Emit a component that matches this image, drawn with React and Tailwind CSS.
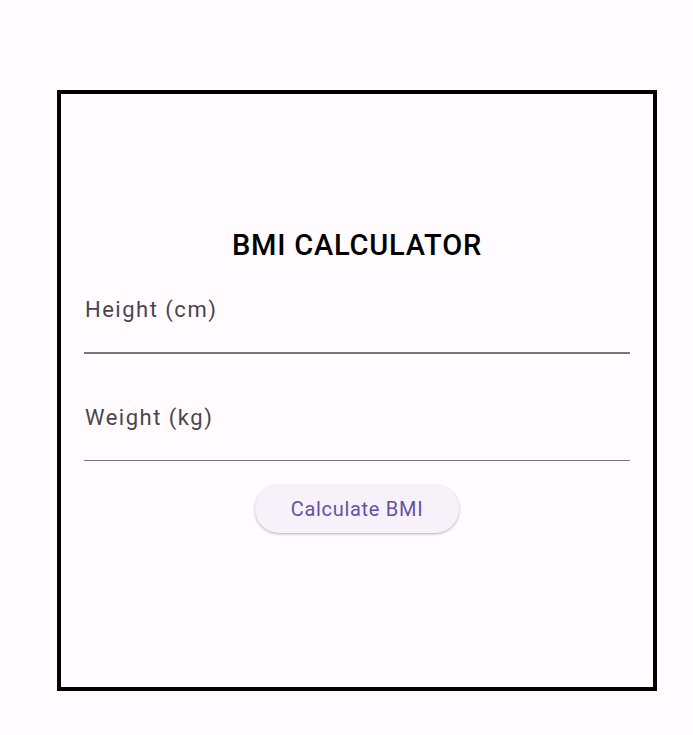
export default function App() {
  return (
    <div className="min-h-screen w-full bg-[#fffbfe] pt-[90px] pl-[57px]" style={{ fontFamily: 'Roboto, "Liberation Sans", sans-serif' }}>
      <div className="w-[600px] h-[601px] border-4 border-black px-[23px] pt-[133px] flex flex-col">
        <h1 className="text-center text-[29px] leading-[36px] text-black font-medium tracking-[0.8px]">BMI CALCULATOR</h1>
        <div className="mt-[34px] flex flex-col">
          <div className="text-[22px] leading-[26px] text-[#49454f] pl-px tracking-[1.5px]">Height (cm)</div>
          <div className="mt-[29px] h-[1.5px] bg-[#79747e]" />
        </div>
        <div className="mt-[51px] flex flex-col">
          <div className="text-[22px] leading-[26px] text-[#49454f] pl-px tracking-[1.5px]">Weight (kg)</div>
          <div className="mt-[29px] h-[1.5px] bg-[#79747e]" />
        </div>
        <div className="mt-[24px] flex justify-center">
          <button className="w-[204px] h-[48px] rounded-full bg-[#f7f2fa] text-[#6750a4] text-[20px] tracking-[0.7px] shadow-[0_1px_3px_rgba(0,0,0,0.3)]">Calculate BMI</button>
        </div>
      </div>
    </div>
  );
}
